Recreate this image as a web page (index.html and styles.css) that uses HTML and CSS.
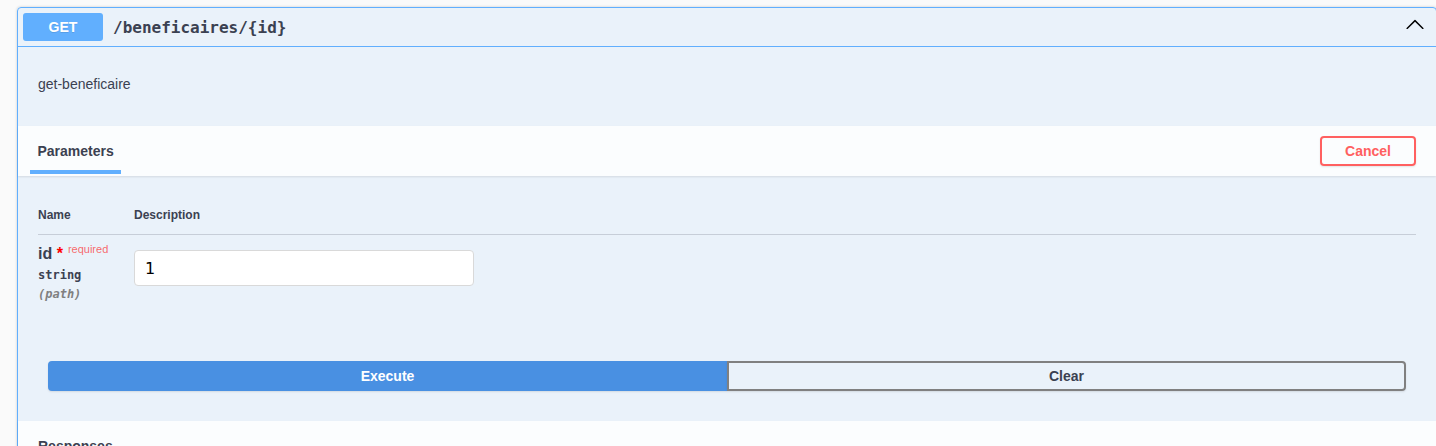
FILE: index.html
```html
<!DOCTYPE html>
<html lang="en">
<head>
<meta charset="utf-8">
<title>GET /beneficaires/{id}</title>
<link rel="stylesheet" href="styles.css">
</head>
<body>
<div class="page">
  <div class="opblock">
    <div class="summary">
      <span class="method">GET</span>
      <span class="path">/beneficaires/{id}</span>
      <svg class="arrow" width="20" height="20" viewBox="0 0 20 20" aria-hidden="true"><path d="M17.418 14.908c.271.268.709.268.979 0s.271-.701 0-.969l-7.908-7.83a.697.697 0 0 0-.979 0l-7.908 7.83c-.27.268-.27.701 0 .969.271.268.709.268.979 0L10 7.718l7.418 7.19z"/></svg>
    </div>
    <div class="description">
      <p>get-beneficaire</p>
    </div>
    <div class="section-header">
      <div class="tab"><h4>Parameters</h4></div>
      <button class="btn cancel">Cancel</button>
    </div>
    <div class="table-container">
      <table class="parameters">
        <thead>
          <tr><th class="col-name">Name</th><th>Description</th></tr>
        </thead>
        <tbody>
          <tr>
            <td class="col-name">
              <div class="param-name"><span class="pname">id</span><span class="star">&nbsp;*</span><span class="req">required</span></div>
              <div class="param-type">string</div>
              <div class="param-in">(path)</div>
            </td>
            <td><input class="param-input" type="text" value="1"></td>
          </tr>
        </tbody>
      </table>
    </div>
    <div class="btn-group">
      <button class="btn execute">Execute</button>
      <button class="btn clear">Clear</button>
    </div>
    <div class="section-header responses">
      <h4>Responses</h4>
    </div>
  </div>
</div>
</body>
</html>
```
FILE: styles.css
```css
html, body {
  margin: 0;
  padding: 0;
  background: #fafafa;
  overflow: hidden;
  font-family: "Liberation Sans", Arial, sans-serif;
  color: #3b4151;
}

.page {
  padding: 7px 0 0 17px;
}

.opblock {
  width: 1420px;
  box-sizing: border-box;
  border: 1px solid #61affe;
  border-radius: 4px;
  background: rgba(97, 175, 254, 0.1);
  box-shadow: 0 0 3px rgba(0, 0, 0, 0.19);
  height: 600px;
}

.summary {
  display: flex;
  align-items: center;
  padding: 5px;
  border-bottom: 1px solid #61affe;
}

.method {
  min-width: 80px;
  padding: 6px 0;
  line-height: 16px;
  font-size: 14px;
  font-weight: 700;
  text-align: center;
  color: #fff;
  background: #61affe;
  border-radius: 3px;
  text-shadow: 0 1px 0 rgba(0, 0, 0, 0.1);
}

.path {
  padding: 0 10px;
  font-family: "DejaVu Sans Mono", monospace;
  font-size: 16px;
  font-weight: 700;
  color: #3b4151;
}

.arrow {
  margin-left: auto;
  margin-right: 6px;
  margin-top: 1px;
  align-self: flex-start;
  fill: #000;
}

.description {
  padding: 28px 20px 32px;
}

.description p {
  margin: 0;
  font-size: 14px;
  line-height: 19px;
}

.section-header {
  display: flex;
  align-items: flex-start;
  justify-content: space-between;
  height: 50px;
  box-sizing: border-box;
  padding: 0 20px 0 12px;
  background: rgba(255, 255, 255, 0.8);
  box-shadow: 0 1px 2px rgba(0, 0, 0, 0.1);
}

.tab {
  padding: 17px 7.5px 11px;
  border-bottom: 4px solid #61affe;
}

h4 {
  margin: 0;
  font-size: 14px;
  line-height: 16px;
  font-weight: 700;
  color: #3b4151;
}

.btn {
  font-family: "Liberation Sans", Arial, sans-serif;
  font-size: 14px;
  font-weight: 700;
  line-height: 16px;
  padding: 5px 23px;
  border: 2px solid #808080;
  border-radius: 4px;
  background: transparent;
  color: #3b4151;
  box-shadow: 0 1px 2px rgba(0, 0, 0, 0.1);
}

.cancel {
  align-self: center;
  color: #ff6060;
  border-color: #ff6060;
}

.table-container {
  padding: 20px 20px 30px;
}

.parameters {
  width: 100%;
  border-spacing: 0;
  border-collapse: separate;
}

.parameters th {
  padding: 12px 0;
  font-size: 12px;
  font-weight: 700;
  text-align: left;
  border-bottom: 1px solid rgba(59, 65, 81, 0.2);
}

.parameters td {
  padding: 10px 0 0;
  vertical-align: top;
}

.col-name {
  width: 96px;
}

.param-name {
  font-size: 16px;
  font-weight: 700;
  white-space: nowrap;
}

.star {
  color: red;
}

.req {
  padding: 5px;
  font-size: 11px;
  font-weight: 400;
  line-height: 0;
  vertical-align: 6px;
  color: rgba(255, 0, 0, 0.6);
}

.param-type {
  padding: 5px 0;
  font-family: "DejaVu Sans Mono", monospace;
  font-size: 12px;
  font-weight: 600;
}

.param-in {
  font-family: "DejaVu Sans Mono", monospace;
  font-size: 12px;
  font-style: italic;
  font-weight: 600;
  color: #808080;
}

.param-input {
  display: block;
  width: 340px;
  height: 36px;
  box-sizing: border-box;
  margin: 5px 0;
  padding: 8px 10px;
  border: 1px solid #d9d9d9;
  border-radius: 4px;
  background: #fff;
  font-family: "DejaVu Sans", sans-serif;
  font-size: 16px;
  color: #000;
}

.btn-group {
  display: flex;
  padding: 30px;
}

.btn-group .btn {
  flex: 1;
}

.execute {
  background: #4990e2;
  border-color: #4990e2;
  color: #fff;
  border-radius: 4px 0 0 4px;
}

.clear {
  border-radius: 0 4px 4px 0;
}

.responses {
  align-items: center;
  padding: 8px 20px;
}
```
